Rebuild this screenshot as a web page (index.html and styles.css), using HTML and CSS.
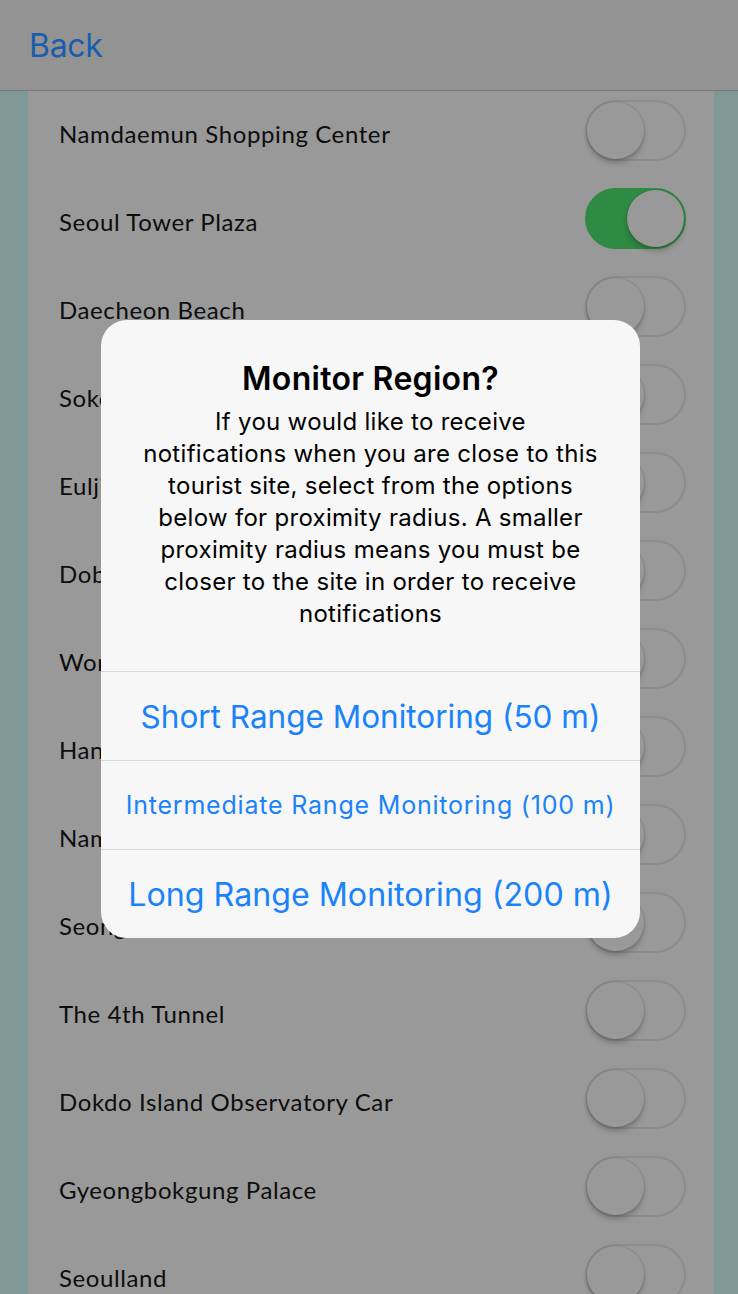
FILE: index.html
```html
<!DOCTYPE html>
<html lang="en">
<head>
<meta charset="utf-8">
<title>Monitor Region</title>
<link rel="stylesheet" href="styles.css">
</head>
<body>
<div class="screen">
  <header class="navbar">
    <span class="back">Back</span>
  </header>
  <main class="content">
    <ul class="list">
      <li class="row"><span class="name">Namdaemun Shopping Center</span><span class="switch"><span class="knob"></span></span></li>
      <li class="row"><span class="name">Seoul Tower Plaza</span><span class="switch on"><span class="knob"></span></span></li>
      <li class="row"><span class="name">Daecheon Beach</span><span class="switch"><span class="knob"></span></span></li>
      <li class="row"><span class="name">Sokcho Beach</span><span class="switch"><span class="knob"></span></span></li>
      <li class="row"><span class="name">Euljiro Underground</span><span class="switch"><span class="knob"></span></span></li>
      <li class="row"><span class="name">Dobongsan Mountain</span><span class="switch"><span class="knob"></span></span></li>
      <li class="row"><span class="name">World Cup Stadium</span><span class="switch"><span class="knob"></span></span></li>
      <li class="row"><span class="name">Hangang Park</span><span class="switch"><span class="knob"></span></span></li>
      <li class="row"><span class="name">Namsan Park</span><span class="switch"><span class="knob"></span></span></li>
      <li class="row"><span class="name">Seongsu Forest</span><span class="switch"><span class="knob"></span></span></li>
      <li class="row"><span class="name">The 4th Tunnel</span><span class="switch"><span class="knob"></span></span></li>
      <li class="row"><span class="name">Dokdo Island Observatory Car</span><span class="switch"><span class="knob"></span></span></li>
      <li class="row"><span class="name">Gyeongbokgung Palace</span><span class="switch"><span class="knob"></span></span></li>
      <li class="row"><span class="name">Seoulland</span><span class="switch"><span class="knob"></span></span></li>
    </ul>
  </main>
</div>
<div class="alert" role="alertdialog">
  <div class="alert-body">
    <h2 class="alert-title">Monitor Region?</h2>
    <p class="alert-message">If you would like to receive<br>notifications when you are close to this<br>tourist site, select from the options<br>below for proximity radius. A smaller<br>proximity radius means you must be<br>closer to the site in order to receive<br>notifications</p>
  </div>
  <div class="alert-actions">
    <button class="action large">Short Range Monitoring (50 m)</button>
    <button class="action small">Intermediate Range Monitoring (100 m)</button>
    <button class="action large long">Long Range Monitoring (200 m)</button>
  </div>
</div>
</body>
</html>
```

FILE: styles.css
```css
* { box-sizing: border-box; }
html, body {
  margin: 0;
  padding: 0;
  width: 738px;
  height: 1294px;
  overflow: hidden;
}
body {
  background: #7f9999;
  font-family: "Inter", "Liberation Sans", sans-serif;
  position: relative;
}
.screen {
  display: flex;
  flex-direction: column;
  height: 1294px;
}
.navbar {
  height: 91px;
  background: #939393;
  border-bottom: 1px solid #777777;
  display: flex;
  align-items: center;
  padding: 0 0 0 29px;
  flex-shrink: 0;
}
.back {
  color: #1b5cad;
  font-size: 32px;
  line-height: 1;
  margin-top: 2px;
  letter-spacing: -0.3px;
}
.content {
  flex: 1;
  padding: 0 24px 0 28px;
  overflow: hidden;
}
.list {
  list-style: none;
  margin: 0;
  padding: 0;
  background: #999999;
  height: 100%;
}
.row {
  height: 88px;
  display: flex;
  align-items: center;
  justify-content: space-between;
  padding: 0 28px 0 31px;
}
.name {
  font-family: "Lato", "Liberation Sans", sans-serif;
  font-size: 24px;
  color: #0d0d0d;
  letter-spacing: 0.6px;
  margin-bottom: 4px;
}
.switch {
  width: 101px;
  height: 61px;
  border-radius: 31px;
  border: 2px solid #8c8c8c;
  background: #999999;
  position: relative;
  margin-bottom: 9px;
  flex-shrink: 0;
}
.switch .knob {
  position: absolute;
  top: 0;
  left: 0;
  width: 57px;
  height: 57px;
  border-radius: 50%;
  background: #999999;
  box-shadow: 0 0 0 1px rgba(0,0,0,0.08), 0 4px 5px rgba(0,0,0,0.22);
}
.switch.on {
  background: #2f8a43;
  border-color: #2f8a43;
}
.switch.on .knob {
  left: auto;
  right: 0;
}
.alert {
  position: absolute;
  top: 320px;
  left: 101px;
  width: 539px;
  background: #f7f7f7;
  border-radius: 26px;
  overflow: hidden;
  display: flex;
  flex-direction: column;
}
.alert-body {
  padding: 41px 16px 41px;
  text-align: center;
  border-bottom: 1px solid #d9d9d9;
}
.alert-title {
  margin: 0;
  font-size: 32px;
  line-height: 36px;
  font-weight: 600;
  letter-spacing: 0.3px;
  color: #000;
}
.alert-message {
  margin: 9px 0 0;
  font-size: 24px;
  line-height: 32px;
  letter-spacing: 0.3px;
  color: #000;
  white-space: nowrap;
}
.alert-actions {
  display: flex;
  flex-direction: column;
}
.action {
  height: 89px;
  border: 0;
  border-top: 1px solid #d9d9d9;
  background: transparent;
  color: #1a82fb;
  font-family: "Inter", "Liberation Sans", sans-serif;
  padding: 0;
  margin: 0;
  text-align: center;
  white-space: nowrap;
}
.action:first-child { border-top: 0; height: 88px; }
.action.large { font-size: 31.5px; }
.action.large.long { font-size: 32.2px; }
.action.small { font-size: 25px; letter-spacing: 0.8px; }
```
